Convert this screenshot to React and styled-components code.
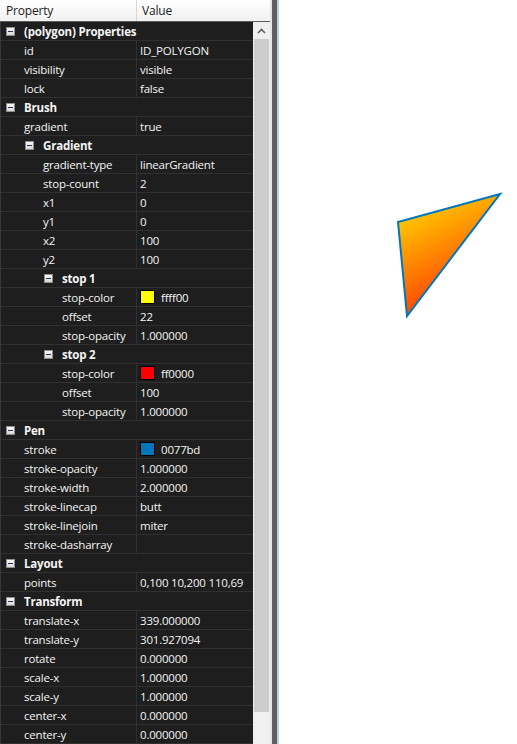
import React from "react";
import styled, { createGlobalStyle } from "styled-components";

const Global = createGlobalStyle`
  html, body { margin: 0; padding: 0; background: #ffffff; }
  body { font-family: "Open Sans", "Noto Sans", sans-serif; }
`;

const Page = styled.div`
  display: flex;
  width: 517px;
  height: 744px;
  overflow: hidden;
`;

const Panel = styled.div`
  width: 270px;
  flex: none;
  display: flex;
  flex-direction: column;
  background: #f0f0f0;
`;

const Header = styled.div`
  display: grid;
  grid-template-columns: 137px 1fr;
  height: 21px;
  border-bottom: 1px solid #5c5c5c;
  background: linear-gradient(#ffffff, #f1f1f1);
  font-size: 12px;
  letter-spacing: -0.2px;
  color: #1a1a1a;
`;

const HeadCell = styled.div`
  display: flex;
  align-items: center;
  padding-left: ${(p) => p.$pad}px;
  border-right: ${(p) => (p.$divider ? "1px solid #d8d8d8" : "none")};
`;

const Body = styled.div`
  flex: 1;
  display: flex;
  min-height: 0;
`;

const Rows = styled.div`
  width: 253px;
  flex: none;
  background: #1e1e1e;
  overflow: hidden;
  border-left: 1px solid #3a3a3a;
  box-sizing: border-box;
`;

const Row = styled.div`
  display: grid;
  grid-template-columns: ${(p) => (p.$cat ? "1fr" : "136px 1fr")};
  height: 19px;
  box-sizing: border-box;
  border-bottom: 1px solid #303030;
  color: #f4f4f4;
  font-size: 11.5px;
  letter-spacing: -0.2px;
  font-weight: ${(p) => (p.$cat ? 700 : 400)};
  white-space: nowrap;
`;

const NameCell = styled.div`
  display: flex;
  align-items: center;
  padding-left: ${(p) => p.$indent}px;
  border-right: 1px solid #303030;
  overflow: hidden;
`;

const CatCell = styled.div`
  display: flex;
  align-items: center;
  padding-left: ${(p) => p.$indent}px;
  gap: 9px;
`;

const ValueCell = styled.div`
  display: flex;
  align-items: center;
  padding-left: 3px;
  gap: 6px;
  overflow: hidden;
`;

const Expander = styled.span`
  position: relative;
  width: 9px;
  height: 9px;
  box-sizing: border-box;
  border: 1px solid #8d8d8d;
  background: linear-gradient(#f7f7f7, #d9d9d9);
  flex: none;
  &::after {
    content: "";
    position: absolute;
    left: 1px;
    top: 3px;
    width: 5px;
    height: 1px;
    background: #2b3a5a;
  }
`;

const Swatch = styled.span`
  width: 15px;
  height: 14px;
  box-sizing: border-box;
  border: 1px solid #000;
  background: ${(p) => p.$color};
  flex: none;
`;

const Scrollbar = styled.div`
  width: 17px;
  flex: none;
  display: flex;
  flex-direction: column;
  align-items: center;
  background: #f0f0f0;
`;

const ArrowBtn = styled.div`
  height: 17px;
  width: 17px;
  display: flex;
  align-items: center;
  justify-content: center;
`;

const Thumb = styled.div`
  width: 15px;
  height: 673px;
  background: #cdcdcd;
`;

const Splitter = styled.div`
  width: 9px;
  flex: none;
  display: flex;
`;

const SplitLine = styled.div`
  width: ${(p) => p.$w}px;
  background: ${(p) => p.$c};
`;

const Canvas = styled.div`
  flex: 1;
  position: relative;
  background: #ffffff;
`;

const Drawing = styled.svg`
  position: absolute;
  left: 0;
  top: 0;
`;

const rows = [
  { cat: "(polygon) Properties", level: 0 },
  { n: "id", v: "ID_POLYGON", level: 0 },
  { n: "visibility", v: "visible", level: 0 },
  { n: "lock", v: "false", level: 0 },
  { cat: "Brush", level: 0 },
  { n: "gradient", v: "true", level: 0 },
  { cat: "Gradient", level: 1 },
  { n: "gradient-type", v: "linearGradient", level: 1 },
  { n: "stop-count", v: "2", level: 1 },
  { n: "x1", v: "0", level: 1 },
  { n: "y1", v: "0", level: 1 },
  { n: "x2", v: "100", level: 1 },
  { n: "y2", v: "100", level: 1 },
  { cat: "stop 1", level: 2 },
  { n: "stop-color", v: "ffff00", color: "#ffff00", level: 2 },
  { n: "offset", v: "22", level: 2 },
  { n: "stop-opacity", v: "1.000000", level: 2 },
  { cat: "stop 2", level: 2 },
  { n: "stop-color", v: "ff0000", color: "#ff0000", level: 2 },
  { n: "offset", v: "100", level: 2 },
  { n: "stop-opacity", v: "1.000000", level: 2 },
  { cat: "Pen", level: 0 },
  { n: "stroke", v: "0077bd", color: "#0077bd", level: 0 },
  { n: "stroke-opacity", v: "1.000000", level: 0 },
  { n: "stroke-width", v: "2.000000", level: 0 },
  { n: "stroke-linecap", v: "butt", level: 0 },
  { n: "stroke-linejoin", v: "miter", level: 0 },
  { n: "stroke-dasharray", v: "", level: 0 },
  { cat: "Layout", level: 0 },
  { n: "points", v: "0,100 10,200 110,69", level: 0 },
  { cat: "Transform", level: 0 },
  { n: "translate-x", v: "339.000000", level: 0 },
  { n: "translate-y", v: "301.927094", level: 0 },
  { n: "rotate", v: "0.000000", level: 0 },
  { n: "scale-x", v: "1.000000", level: 0 },
  { n: "scale-y", v: "1.000000", level: 0 },
  { n: "center-x", v: "0.000000", level: 0 },
  { n: "center-y", v: "0.000000", level: 0 },
];

function PropRow({ r }) {
  if (r.cat) {
    return (
      <Row $cat>
        <CatCell $indent={5 + r.level * 19}>
          <Expander />
          <span>{r.cat}</span>
        </CatCell>
      </Row>
    );
  }
  return (
    <Row>
      <NameCell $indent={23 + r.level * 19}>{r.n}</NameCell>
      <ValueCell>
        {r.color && <Swatch $color={r.color} />}
        <span>{r.v}</span>
      </ValueCell>
    </Row>
  );
}

export default function App() {
  return (
    <>
      <Global />
      <Page>
        <Panel>
          <Header>
            <HeadCell $pad={6} $divider>Property</HeadCell>
            <HeadCell $pad={5}>Value</HeadCell>
          </Header>
          <Body>
            <Rows>
              {rows.map((r, i) => (
                <PropRow key={i} r={r} />
              ))}
            </Rows>
            <Scrollbar>
              <ArrowBtn>
                <svg width="9" height="6" viewBox="0 0 9 6">
                  <path d="M1 5 L4.5 1.5 L8 5" fill="none" stroke="#606060" strokeWidth="1.6" />
                </svg>
              </ArrowBtn>
              <Thumb />
            </Scrollbar>
          </Body>
        </Panel>
        <Splitter>
          <SplitLine $w={2} $c="#e6e6e6" />
          <SplitLine $w={5} $c="#5e5e5e" />
          <SplitLine $w={2} $c="#b9cdef" />
        </Splitter>
        <Canvas>
          <Drawing width="238" height="744" viewBox="0 0 238 744">
            <defs>
              <linearGradient
                id="polyFill"
                gradientUnits="userSpaceOnUse"
                x1="100"
                y1="184"
                x2="181"
                y2="348"
              >
                <stop offset="0" stopColor="#ffff00" />
                <stop offset="1" stopColor="#ff0000" />
              </linearGradient>
            </defs>
            <polygon
              points="119,222 128,316 221,194"
              fill="url(#polyFill)"
              stroke="#0077bd"
              strokeWidth="2"
              strokeLinejoin="miter"
            />
          </Drawing>
        </Canvas>
      </Page>
    </>
  );
}
